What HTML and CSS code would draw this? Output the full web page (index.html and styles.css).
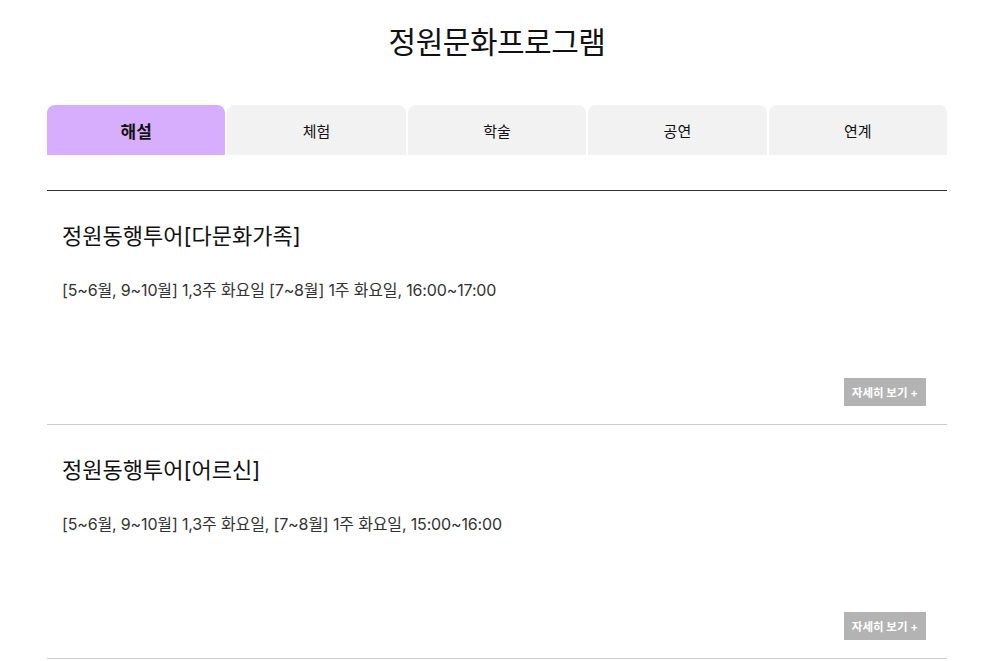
FILE: index.html
```html
<!DOCTYPE html>
<html lang="ko">
<head>
<meta charset="utf-8">
<title>정원문화프로그램</title>
<link rel="stylesheet" href="styles.css">
</head>
<body>
<div class="wrap">
  <h1 class="page-title">정원문화프로그램</h1>
  <ul class="tabs">
    <li class="tab active">해설</li>
    <li class="tab">체험</li>
    <li class="tab">학술</li>
    <li class="tab">공연</li>
    <li class="tab">연계</li>
  </ul>
  <ul class="list">
    <li class="item">
      <h2 class="item-title">정원동행투어[다문화가족]</h2>
      <p class="item-desc">[5~6월, 9~10월] 1,3주 화요일 [7~8월] 1주 화요일, 16:00~17:00</p>
      <div class="item-foot"><a class="more" href="#">자세히 보기 +</a></div>
    </li>
    <li class="item">
      <h2 class="item-title">정원동행투어[어르신]</h2>
      <p class="item-desc">[5~6월, 9~10월] 1,3주 화요일, [7~8월] 1주 화요일, 15:00~16:00</p>
      <div class="item-foot"><a class="more" href="#">자세히 보기 +</a></div>
    </li>
  </ul>
</div>
</body>
</html>
```
FILE: styles.css
```css
* { box-sizing: border-box; }
html, body { margin: 0; padding: 0; background: #fff; }
body {
  font-family: Inter, "Noto Sans CJK KR", sans-serif;
  color: #111;
}
.wrap { width: 900px; margin: 0 0 0 47px; }
.page-title {
  margin: 20px 0 0;
  font-size: 30px;
  line-height: 44px;
  font-weight: 400;
  text-align: center;
  letter-spacing: -0.5px;
}
.tabs {
  list-style: none;
  margin: 41px 0 0;
  padding: 0;
  display: grid;
  grid-template-columns: repeat(5, 1fr);
  gap: 2px;
}
.tab {
  height: 50px;
  display: flex;
  align-items: center;
  justify-content: center;
  background: #f2f2f2;
  border-radius: 8px 8px 0 0;
  font-size: 15px;
  color: #111;
}
.tab.active {
  background: #d7adfd;
  font-weight: 700;
  font-size: 17px;
}
.list {
  list-style: none;
  margin: 35px 0 0;
  padding: 0;
  border-top: 1px solid #333;
}
.item {
  padding: 30px 21px 18px 15px;
  border-bottom: 1px solid #ccc;
}
.item-title {
  margin: 0;
  font-size: 22px;
  line-height: 30px;
  font-weight: 400;
  color: #111;
}
.item-desc {
  margin: 27px 0 0;
  font-size: 16px;
  line-height: 24px;
  letter-spacing: -0.15px;
  color: #333;
}
.item-foot {
  display: flex;
  justify-content: flex-end;
  margin-top: 76px;
}
.more {
  display: flex;
  align-items: center;
  height: 28px;
  padding: 0 8px;
  background: #b3b3b3;
  color: #fff;
  font-size: 11.5px;
  font-weight: 700;
  text-decoration: none;
}
```
